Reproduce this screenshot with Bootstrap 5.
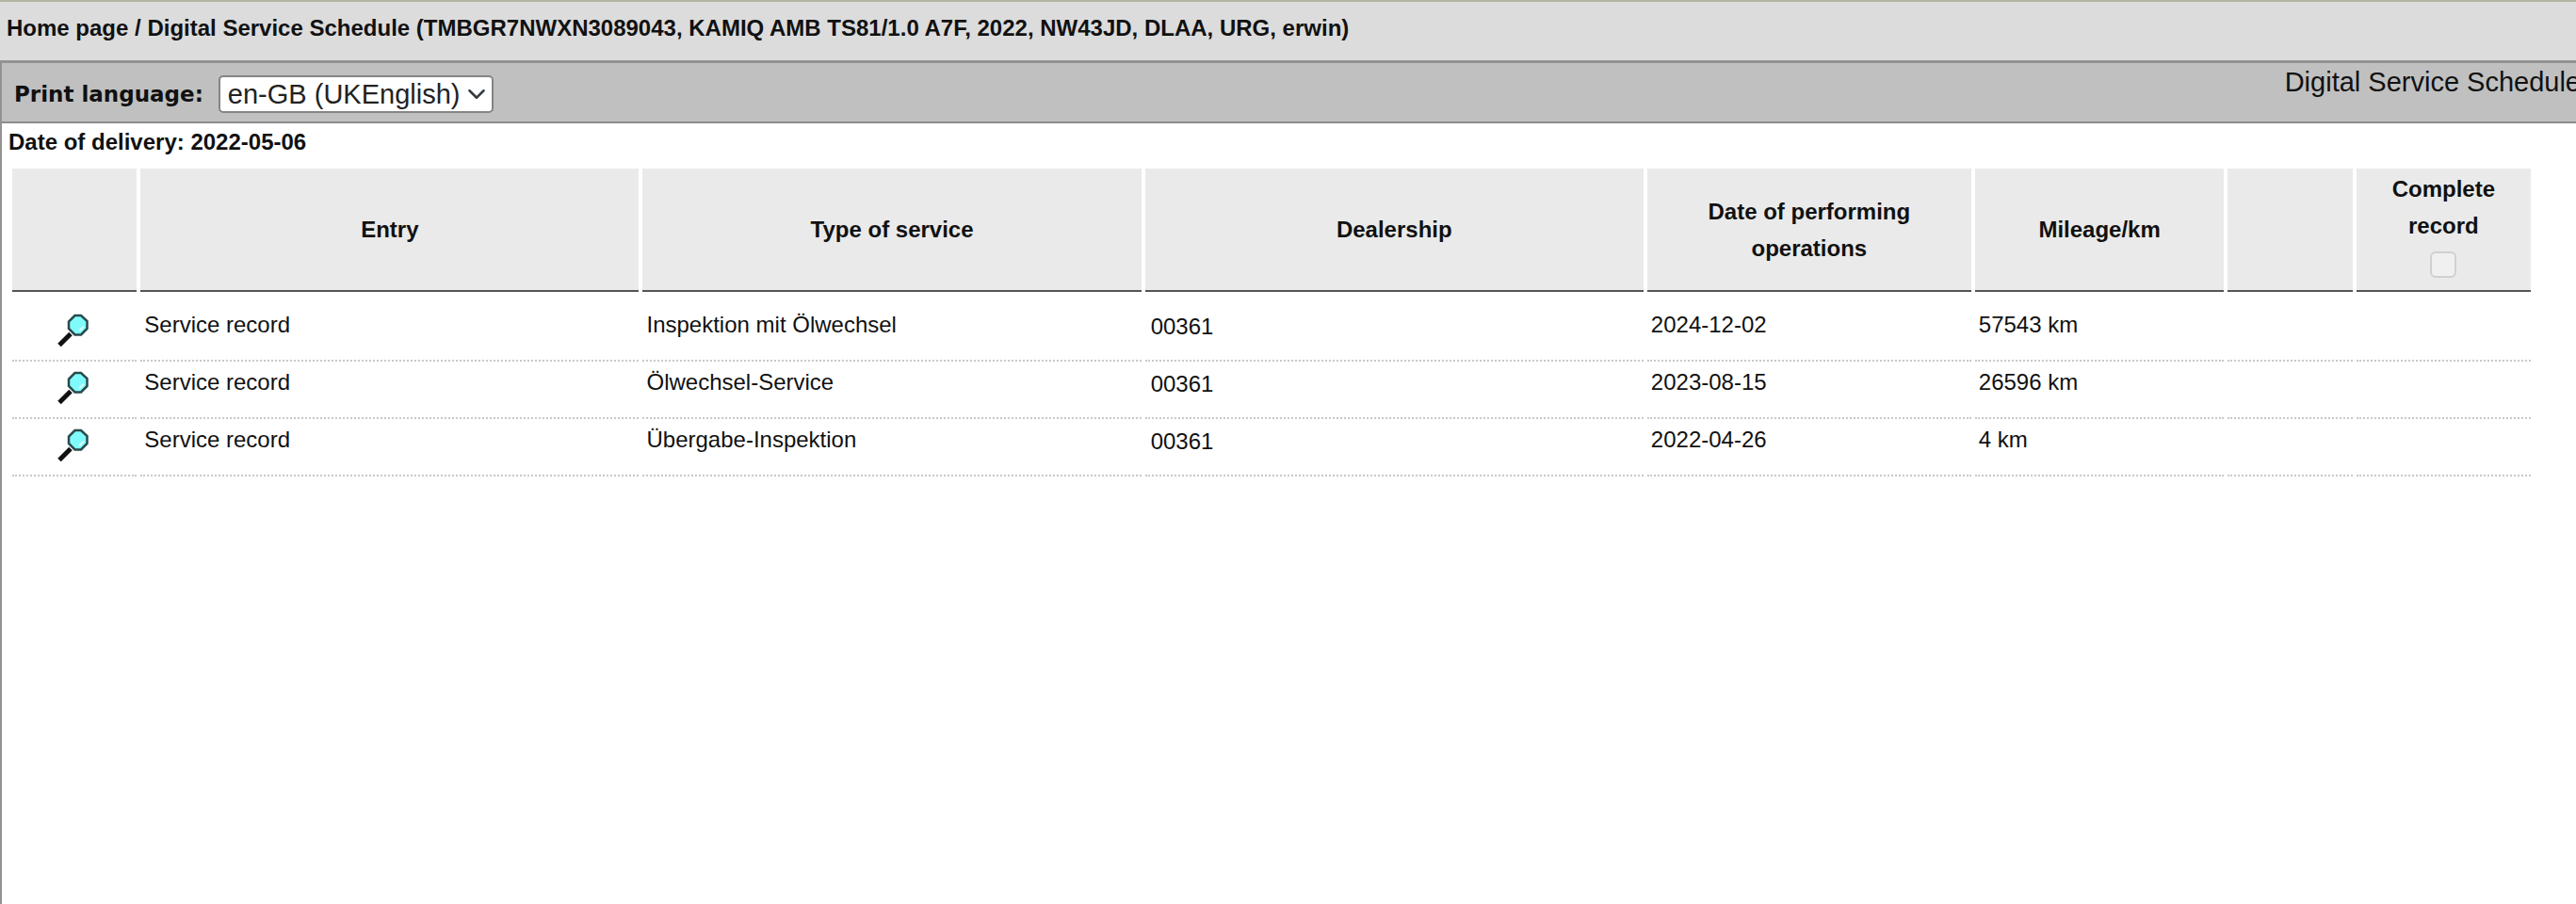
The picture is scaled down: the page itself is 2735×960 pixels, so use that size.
<!DOCTYPE html>
<html lang="en">
<head>
<meta charset="utf-8">
<meta name="viewport" content="width=device-width, initial-scale=1">
<title>Digital Service Schedule</title>
<link href="https://cdn.jsdelivr.net/npm/bootstrap@5.3.0/dist/css/bootstrap.min.css" rel="stylesheet">
<style>
  body { font-family: "Liberation Sans", Arial, sans-serif; font-size: 24px; line-height: 40px; color: #111; background: #fff; overflow-x: hidden; }
  .crumbs { background: #dcdcdc; border-top: 2px solid #b4b4a2; padding: 8px 7px 14px; }
  .crumbs a { color: inherit; }
  .panel { border-left: 2px solid #929292; }
  .toolbar { background: #c0c0c0; border-top: 3px solid #929292; border-bottom: 2px solid #8c8c8c; min-height: 67px; }
  .lang { padding: 3px 0 0 13px; }
  .lang-label { font-family: "DejaVu Sans", Verdana, sans-serif; font-size: 23px; }
  .lang-select { width: 292px; height: 40px; padding: 0 30px 0 8px; font-size: 29px; line-height: 36px; color: #222; border: 2px solid #858585; border-radius: 5px; background-position: right 6px center; background-size: 20px 20px; }
  .page-title { font-size: 29px; line-height: 40px; margin-right: -5px; }
  .delivery { padding-left: 7px; }
  .table-wrap { padding: 8px 44px 0 7px; }
  .records { width: 100%; table-layout: fixed; border-collapse: separate; border-spacing: 4px 0; }
  .records th { background: #eaeaea; border-bottom: 2px solid #555; height: 131px; padding: 2px 24px; line-height: 39px; text-align: center; vertical-align: middle; }
  .records .complete { padding: 1px 24px 13px; }
  .records td { height: 61px; padding: 1px 4px 17px; border-bottom: 2px dotted #c8c8c8; vertical-align: middle; }
  .records .spacer td { height: 13px; padding: 0; border: 0; }
  .records .dealer { padding: 3px 6px 15px; }
  .records .look { padding: 0 2px 4px 0; line-height: 0; text-align: center; }
  .all-check { width: 28px; height: 28px; margin: 8px 0 0; border: 2px solid #d0d0d0; border-radius: 5px; background: #f0f0f0; }
  .all-check:disabled { opacity: 1; }
</style>
</head>
<body class="d-flex flex-column min-vh-100">
<nav class="crumbs fw-bold text-nowrap" aria-label="Breadcrumb"><a href="#" class="text-decoration-none">Home page</a> / Digital Service Schedule (TMBGR7NWXN3089043, KAMIQ AMB TS81/1.0 A7F, 2022, NW43JD, DLAA, URG, erwin)</nav>
<main class="panel flex-grow-1">
  <div class="toolbar d-flex justify-content-between">
    <div class="lang d-flex align-items-center">
      <label for="lang" class="lang-label fw-bold me-3 text-nowrap">Print language:</label>
      <select id="lang" class="form-select lang-select"><option>en-GB (UKEnglish)</option></select>
    </div>
    <h1 class="page-title fw-normal mb-0 text-nowrap">Digital Service Schedule</h1>
  </div>
  <p class="delivery fw-bold mb-0">Date of delivery: 2022-05-06</p>
  <div class="table-wrap">
    <table class="records">
      <colgroup><col style="width:5%"><col style="width:20%"><col style="width:20%"><col style="width:20%"><col style="width:13%"><col style="width:10%"><col style="width:5%"><col style="width:7%"></colgroup>
      <thead>
        <tr><th></th><th>Entry</th><th>Type of service</th><th>Dealership</th><th>Date of performing operations</th><th>Mileage/km</th><th></th>
          <th class="complete"><label for="all" class="d-block">Complete record</label><input id="all" type="checkbox" class="form-check-input all-check d-block mx-auto" disabled></th></tr>
      </thead>
      <tbody>
        <tr class="spacer"><td colspan="8"></td></tr>
        <tr><td class="look"><svg width="36" height="36" viewBox="0 0 36 36" role="img" aria-label="Show"><use href="#lens"/></svg></td><td>Service record</td><td>Inspektion mit Ölwechsel</td><td class="dealer">00361</td><td>2024-12-02</td><td>57543 km</td><td></td><td></td></tr>
        <tr><td class="look"><svg width="36" height="36" viewBox="0 0 36 36" role="img" aria-label="Show"><use href="#lens"/></svg></td><td>Service record</td><td>Ölwechsel-Service</td><td class="dealer">00361</td><td>2023-08-15</td><td>26596 km</td><td></td><td></td></tr>
        <tr><td class="look"><svg width="36" height="36" viewBox="0 0 36 36" role="img" aria-label="Show"><use href="#lens"/></svg></td><td>Service record</td><td>Übergabe-Inspektion</td><td class="dealer">00361</td><td>2022-04-26</td><td>4 km</td><td></td><td></td></tr>
      </tbody>
    </table>
  </div>
</main>
<svg class="d-none"><defs><g id="lens">
  <path d="M3 33.500 L15 21.500" stroke="#111" stroke-width="5"/>
  <path d="M19.500 2h6.500l6.500 6v8l-6.500 6.500H19.500l-6.500-6.500V8.500z" fill="#7ffbfb" stroke="#2b4a4c" stroke-width="2.500"/>
  <path d="M24 18.500l5-5" stroke="#d8ffff" stroke-width="2"/>
</g></defs></svg>
<script src="https://cdn.jsdelivr.net/npm/bootstrap@5.3.0/dist/js/bootstrap.bundle.min.js"></script>
</body>
</html>
